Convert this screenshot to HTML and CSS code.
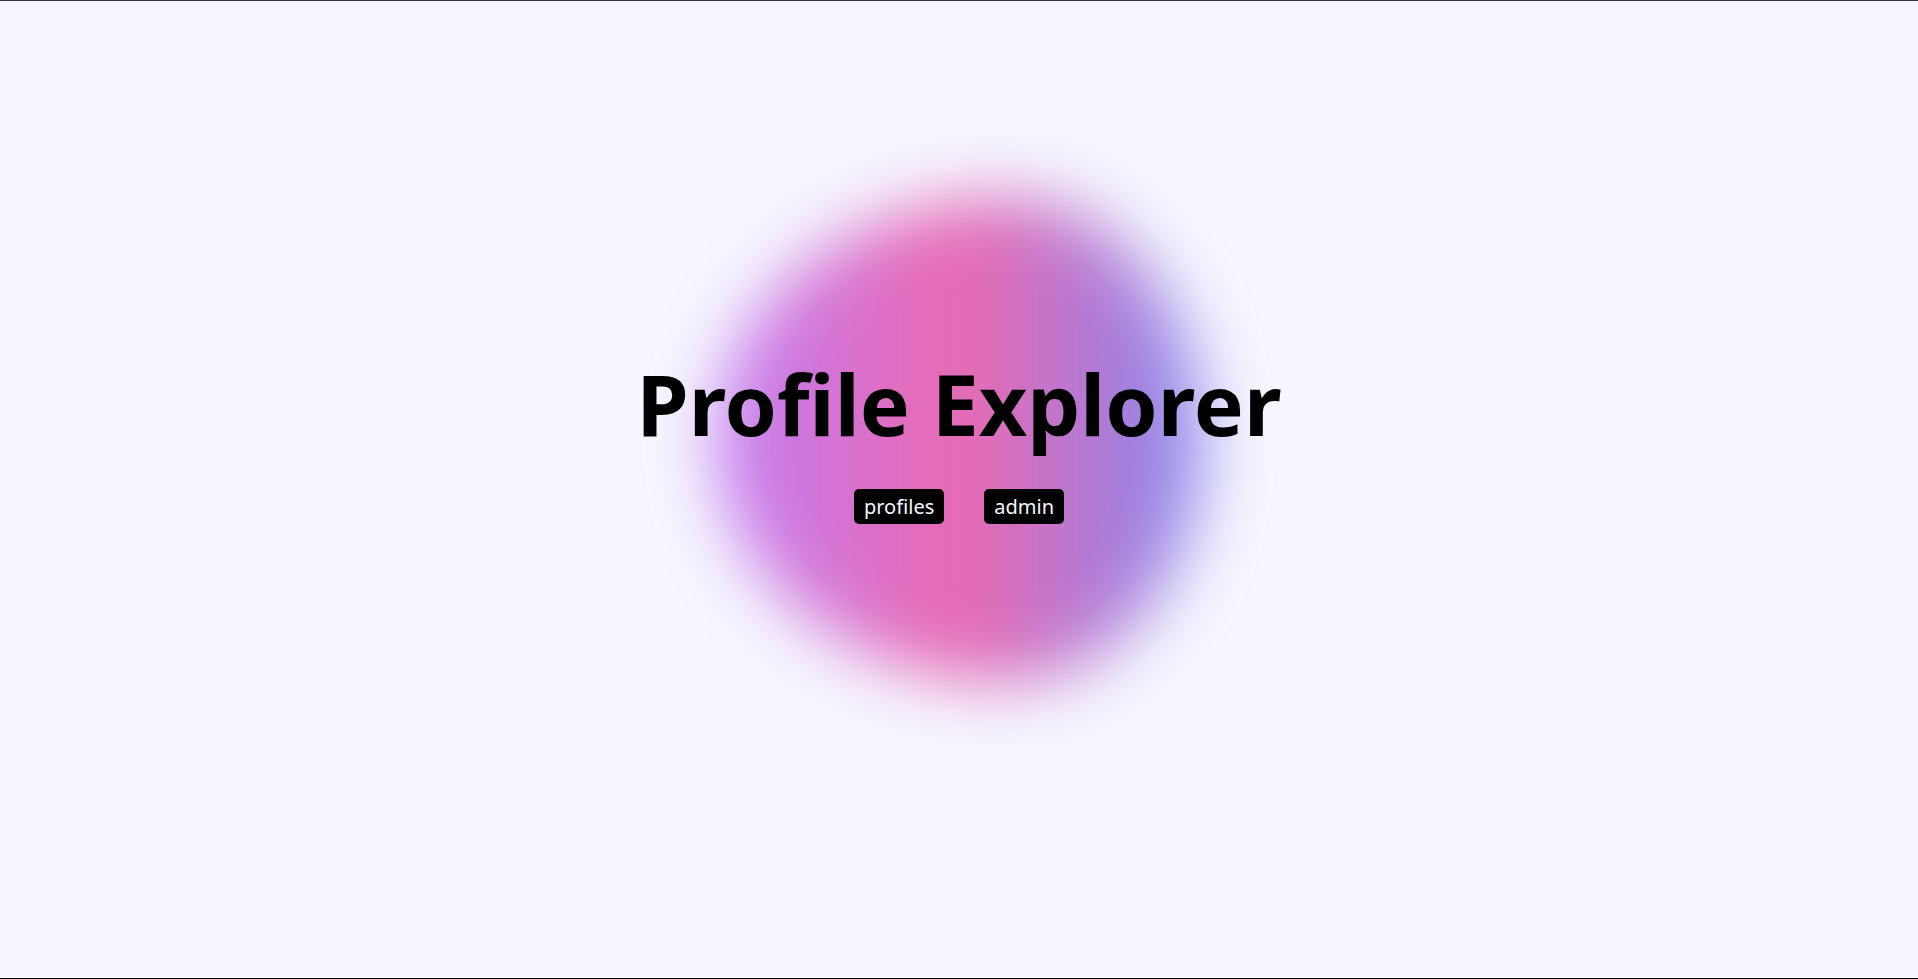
FILE: index.html
```html
<!DOCTYPE html>
<html lang="en">
<head>
    <meta charset="UTF-8">
    <meta name="viewport" content="width=device-width, initial-scale=1.0">
    <title>Profile Explorer</title>
    <link rel="stylesheet" href="styles.css">
</head>
<body>
    <main class="home">
        <div class="blob"></div>
        <div class="hero">
            <h1 class="title">Profile Explorer</h1>
            <nav class="links">
                <a href="/profiles" class="link">profiles</a>
                <a href="/admin" class="link">admin</a>
            </nav>
        </div>
    </main>
</body>
</html>
```

FILE: styles.css
```css
* {
    box-sizing: border-box;
}

body {
    margin: 0;
    background: #f6f6ff;
    color: black;
    font-family: "Noto Sans", "Open Sans", sans-serif;
}

.home {
    min-height: 100vh;
    display: grid;
    place-items: center;
    padding-bottom: 100px;
    border-top: 1px solid #332f38;
    border-bottom: 1px solid black;
    overflow: hidden;
}

.blob,
.hero {
    grid-area: 1 / 1;
}

/* Blurred shape behind the title */
.blob {
    width: 484px;
    height: 484px;
    border-radius: 60% 40% 40% 60% / 50%;
    background: linear-gradient(to right, #c07cf4, #e86ab4 47%, #e86ab4 52%, #8488f0);
    filter: blur(33px);
}

.hero {
    position: relative;
    display: flex;
    flex-direction: column;
    align-items: center;
    gap: 37px;
}

.title {
    margin: 0;
    font-size: 84px;
    font-weight: 700;
    line-height: 96px;
    text-align: center;
}

.links {
    display: flex;
    gap: 40px;
}

.link {
    padding: 4px 10px;
    background: black;
    color: #f6f6ff;
    border-radius: 5px;
    font-size: 20px;
    line-height: 27px;
    text-decoration: none;
}

.link:hover {
    background: #333;
}
```
